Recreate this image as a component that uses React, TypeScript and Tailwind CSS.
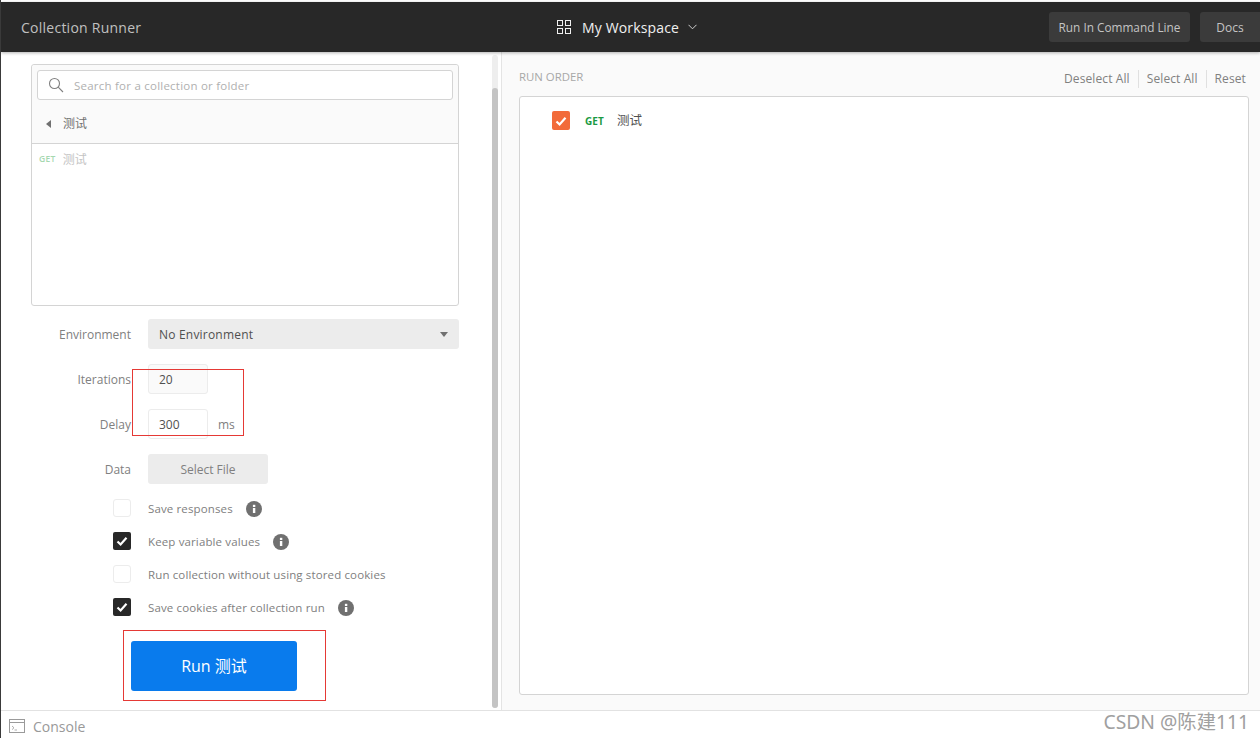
const sans = "font-['Open_Sans','Noto_Sans_CJK_SC',sans-serif]";

function CheckMark({ size = 12 }: { size?: number }) {
  return (
    <svg width={size} height={size} viewBox="0 0 12 12" fill="none">
      <path d="M1.5 6.5L4.6 9.5L10.5 2.8" stroke="#fff" strokeWidth="2.2" />
    </svg>
  );
}

function InfoDot() {
  return (
    <svg width="16" height="16" viewBox="0 0 16 16">
      <circle cx="8" cy="8" r="8" fill="#707070" />
      <rect x="6.9" y="7" width="2.4" height="5" fill="#fff" />
      <rect x="6.9" y="3.8" width="2.4" height="2.2" fill="#fff" />
    </svg>
  );
}

function OptionRow({ label, checked, info }: { label: string; checked?: boolean; info?: boolean }) {
  return (
    <div className="flex items-center h-[18px]">
      {checked ? (
        <span className="w-[18px] h-[18px] rounded-[2px] bg-[#282828] flex items-center justify-center shrink-0">
          <CheckMark />
        </span>
      ) : (
        <span className="w-[18px] h-[18px] rounded-[3px] border border-[#ececec] bg-white shrink-0" />
      )}
      <span className="ml-[17px] mt-[2px] text-[11.5px] text-[#808080] tracking-[0.13px] whitespace-nowrap">{label}</span>
      {info && (
        <span className="ml-[13px] mt-[2px] flex">
          <InfoDot />
        </span>
      )}
    </div>
  );
}

function FieldRow({ label, children }: { label: string; children: React.ReactNode }) {
  return (
    <div className="flex items-center h-[30px]">
      <span className="w-[100px] mt-[2px] text-right text-[12px] text-[#808080] shrink-0">{label}</span>
      <div className="ml-[17px] flex items-center flex-1">{children}</div>
    </div>
  );
}

export default function App() {
  return (
    <div className={`${sans} relative w-[1260px] h-[738px] overflow-hidden bg-white border-l border-[#3a3a3a] flex flex-col`}>
      {/* top bar */}
      <header className="mt-[2px] h-[50px] shrink-0 bg-[#282828] shadow-[0_1px_3px_rgba(0,0,0,0.3)] z-10 flex items-center pl-[20px]">
        <div className="w-[536px] text-[14px] tracking-[0.25px] text-[#c0c0c0]">Collection Runner</div>
        <div className="flex items-center text-white">
          <svg width="14" height="14" viewBox="0 0 14 14" fill="none" stroke="#f0f0f0" strokeWidth="1">
            <rect x="0.5" y="0.5" width="5" height="5" />
            <rect x="8.5" y="0.5" width="5" height="5" />
            <rect x="0.5" y="8.5" width="5" height="5" />
            <rect x="8.5" y="8.5" width="5" height="5" />
          </svg>
          <span className="ml-[11px] text-[14px] tracking-[0.15px] text-[#f0f0f0]">My Workspace</span>
          <svg className="ml-[9px]" width="9" height="6" viewBox="0 0 9 6" fill="none" stroke="#d0d0d0" strokeWidth="1">
            <path d="M0.5 0.8L4.5 4.8L8.5 0.8" />
          </svg>
        </div>
        <div className="ml-auto flex items-center gap-[10px]">
          <button className="h-[30px] w-[141px] pt-[2px] rounded-[3px] bg-[#3b3b3b] text-[11.8px] text-[#c4c4c4] whitespace-nowrap">Run In Command Line</button>
          <button className="h-[30px] w-[60px] pt-[2px] rounded-l-[3px] bg-[#3b3b3b] text-[12px] text-[#c4c4c4]">Docs</button>
        </div>
      </header>

      <main className="flex-1 min-h-0 flex">
        {/* left pane */}
        <section className="w-[500px] shrink-0 relative pl-[30px] pt-[12px]">
          <div className="w-[428px] h-[242px] rounded-[3px] border border-[#d4d4d4] bg-white">
            <div className="h-[79px] rounded-t-[3px] border-b border-[#d4d4d4] bg-[#fafafa] px-[5px] pt-[5px]">
              <div className="h-[30px] rounded-[3px] border border-[#d4d4d4] bg-white flex items-center pl-[10px]">
                <svg width="16" height="16" viewBox="0 0 16 16" fill="none" stroke="#808080" strokeWidth="1.1">
                  <circle cx="6.5" cy="6.5" r="5" />
                  <path d="M10.2 10.2L15 15" />
                </svg>
                <span className="ml-[10px] mt-[2px] text-[11.5px] tracking-[0.23px] text-[#b0b0b0]">Search for a collection or folder</span>
              </div>
              <div className="mt-[14px] flex items-center pl-[9px] h-[20px]">
                <span className="w-0 h-0 border-y-[4px] border-y-transparent border-r-[5px] border-r-[#707070]" />
                <span className="ml-[12px] text-[12px] text-[#707070]">测试</span>
              </div>
            </div>
            <div className="flex items-center h-[31px] pl-[7px]">
              <span className="text-[8.5px] font-semibold tracking-[0.3px] text-[#a6d8b0]">GET</span>
              <span className="ml-[7px] text-[12px] text-[#c4c4c4]">测试</span>
            </div>
          </div>

          <div className="mt-[13px] w-[428px] flex flex-col gap-[15px]">
            <FieldRow label="Environment">
              <div className="w-full h-[30px] rounded-[3px] bg-[#ececec] flex items-center pl-[11px] pr-[11px] text-[12px] font-medium tracking-[0.2px] text-[#505050]">
                <span className="mt-[2px]">No Environment</span>
                <span className="ml-auto w-0 h-0 border-x-[4px] border-x-transparent border-t-[5px] border-t-[#707070]" />
              </div>
            </FieldRow>
            <FieldRow label="Iterations">
              <div className="w-[60px] h-[30px] pt-[2px] rounded-[3px] border border-[#ececec] bg-[#fafafa] flex items-center pl-[10px] text-[12px] text-[#505050]">20</div>
            </FieldRow>
            <FieldRow label="Delay">
              <div className="w-[60px] h-[30px] pt-[2px] rounded-[3px] border border-[#ececec] bg-white flex items-center pl-[10px] text-[12px] text-[#505050]">300</div>
              <span className="ml-[10px] mt-[2px] text-[12px] text-[#808080]">ms</span>
            </FieldRow>
            <FieldRow label="Data">
              <button className="w-[120px] h-[30px] pt-[2px] rounded-[3px] bg-[#ececec] text-[12px] text-[#808080]">Select File</button>
            </FieldRow>
          </div>

          <div className="mt-[15px] ml-[82px] flex flex-col gap-[15px]">
            <OptionRow label="Save responses" info />
            <OptionRow label="Keep variable values" checked info />
            <OptionRow label="Run collection without using stored cookies" />
            <OptionRow label="Save cookies after collection run" checked info />
          </div>

          <button className="mt-[25px] ml-[100px] w-[166px] h-[50px] rounded-[3px] bg-[#097bed] text-[16px] text-white">Run 测试</button>

          {/* scrollbar */}
          <div className="absolute left-[491px] top-[3px] bottom-[2px] w-[6px] rounded-[3px] bg-[#eeeeee]">
            <div className="absolute left-0 right-0 top-[33px] bottom-0 rounded-[3px] bg-[#c4c4c4]" />
          </div>
        </section>

        {/* right pane */}
        <section className="flex-1 min-w-0 bg-[#fafafa] border-l border-[#e4e4e4] pl-[17px] pr-[11px]">
          <div className="h-[44px] flex items-center pr-[3px]">
            <span className="text-[11.4px] text-[#a8a8a8] mt-[6px]">RUN ORDER</span>
            <div className="ml-auto flex items-center text-[12px] tracking-[0.1px] text-[#808080] mt-[10px]">
              <span className="pr-[8px] border-r border-[#e0e0e0]">Deselect All</span>
              <span className="px-[8px] border-r border-[#e0e0e0]">Select All</span>
              <span className="pl-[8px]">Reset</span>
            </div>
          </div>
          <div className="h-[599px] rounded-[3px] border border-[#d4d4d4] bg-white pl-[32px] pt-[14px]">
            <div className="flex items-center h-[19px]">
              <span className="w-[18px] h-[19px] rounded-[2px] bg-[#f26b3a] flex items-center justify-center">
                <CheckMark />
              </span>
              <span className="ml-[15px] mt-[2px] text-[10px] font-bold tracking-[0.1px] text-[#1a9a44]">GET</span>
              <span className="ml-[13px] mt-[2px] text-[12.5px] text-[#505050]">测试</span>
            </div>
          </div>
        </section>
      </main>

      {/* bottom bar */}
      <footer className="h-[28px] pt-[3px] shrink-0 border-t border-[#e2e2e2] bg-white flex items-center pl-[8px]">
        <svg width="16" height="14" viewBox="0 0 16 14" fill="none" stroke="#9a9a9a" strokeWidth="1">
          <rect x="0.5" y="0.5" width="15" height="13" />
          <path d="M0.5 3.5H15.5" />
          <path d="M3 7L5 8.8L3 10.6M5.5 11H8" strokeWidth="0.8" />
        </svg>
        <span className="ml-[8px] text-[14px] text-[#999999]">Console</span>
      </footer>

      {/* annotations drawn over the screenshot */}
      <div className="absolute left-[131px] top-[369px] w-[112px] h-[67px] border border-[#e53935]" />
      <div className="absolute left-[122px] top-[630px] w-[203px] h-[71px] border border-[#e53935]" />
      <div className="absolute right-[11px] top-[708px] text-[19.3px] text-[#a0a0a0] whitespace-nowrap font-['Noto_Sans','Noto_Sans_CJK_SC',sans-serif]">CSDN @陈建111</div>
    </div>
  );
}
